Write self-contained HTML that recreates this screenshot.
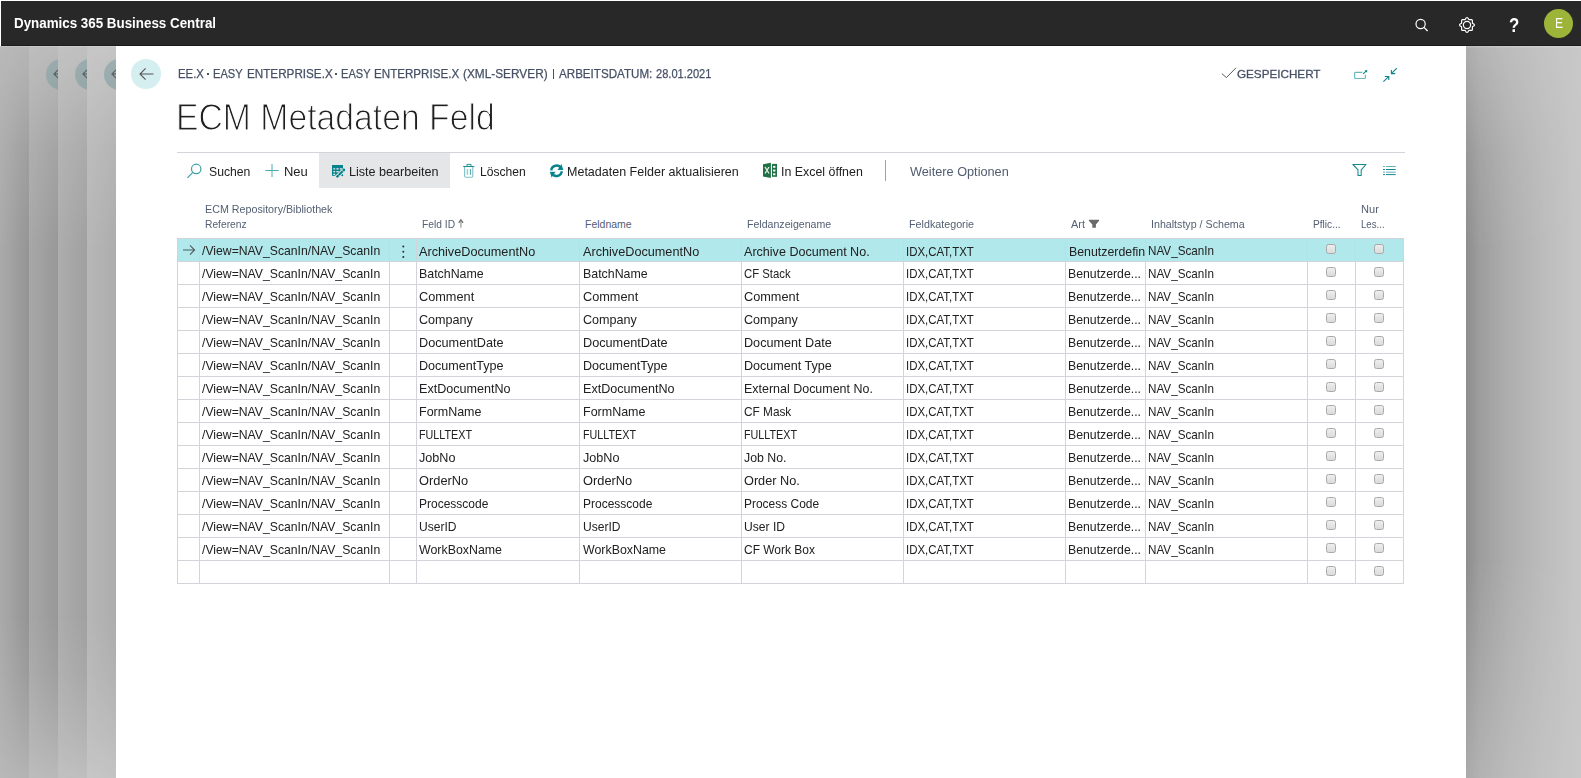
<!DOCTYPE html>
<html><head><meta charset="utf-8">
<style>
*{box-sizing:border-box;margin:0;padding:0}
html,body{width:1581px;height:778px;overflow:hidden;background:#fff}
body{font-family:"Liberation Sans",sans-serif;position:relative;color:#212121}
.abs{position:absolute}
.t{position:absolute;white-space:pre;transform-origin:0 50%;display:block}
.cb{width:10px;height:10px;border:1px solid #a9a9a9;border-radius:2.5px;background:linear-gradient(#eee,#dbdbdb)}
#topbar{left:1px;top:1px;width:1580px;height:45px;background:#282828;border-bottom:1px solid #1c1c1c}
</style></head><body>
<div id="topbar" class="abs"></div>
<div class="abs" style="left:0px;top:46px;width:29px;height:732px;background:#bcbcbc;"></div>
<div class="abs" style="left:29px;top:46px;width:29px;height:732px;background:#c2c2c2;"></div>
<div class="abs" style="left:58px;top:46px;width:29px;height:732px;background:#c6c6c6;"></div>
<div class="abs" style="left:87px;top:46px;width:29px;height:732px;background:#cacaca;"></div>
<div class="abs" style="left:29px;top:46px;width:29px;height:80px;overflow:hidden"><div class="abs" style="left:16.6px;top:12.5px;width:31px;height:31px;border-radius:50%;background:#a2b4b6"></div><svg class="abs" style="left:23.4px;top:20px" width="16" height="16" viewBox="0 0 16 16"><path d="M7.5 2.5 L2 8 L7.5 13.5 M2 8 H15" fill="none" stroke="#5f6363" stroke-width="1.2"/></svg></div>
<div class="abs" style="left:58px;top:46px;width:29px;height:80px;overflow:hidden"><div class="abs" style="left:16.6px;top:12.5px;width:31px;height:31px;border-radius:50%;background:#a2b4b6"></div><svg class="abs" style="left:23.4px;top:20px" width="16" height="16" viewBox="0 0 16 16"><path d="M7.5 2.5 L2 8 L7.5 13.5 M2 8 H15" fill="none" stroke="#5f6363" stroke-width="1.2"/></svg></div>
<div class="abs" style="left:87px;top:46px;width:29px;height:80px;overflow:hidden"><div class="abs" style="left:16.6px;top:12.5px;width:31px;height:31px;border-radius:50%;background:#a2b4b6"></div><svg class="abs" style="left:23.4px;top:20px" width="16" height="16" viewBox="0 0 16 16"><path d="M7.5 2.5 L2 8 L7.5 13.5 M2 8 H15" fill="none" stroke="#5f6363" stroke-width="1.2"/></svg></div>
<div class="abs" style="left:0px;top:46px;width:29px;height:732px;background:linear-gradient(to right,rgba(0,0,0,0.09),rgba(0,0,0,0.21));-webkit-mask-image:linear-gradient(to bottom,rgba(0,0,0,.16) 0,rgba(0,0,0,.30) 4%,rgba(0,0,0,.72) 14%,#000 28%,#000 78%,rgba(0,0,0,.82) 86%,rgba(0,0,0,.5) 94%,rgba(0,0,0,.2) 100%);mask-image:linear-gradient(to bottom,rgba(0,0,0,.16) 0,rgba(0,0,0,.30) 4%,rgba(0,0,0,.72) 14%,#000 28%,#000 78%,rgba(0,0,0,.82) 86%,rgba(0,0,0,.5) 94%,rgba(0,0,0,.2) 100%);"></div>
<div class="abs" style="left:29px;top:46px;width:29px;height:732px;background:linear-gradient(to right,rgba(0,0,0,0.134),rgba(0,0,0,0.216));-webkit-mask-image:linear-gradient(to bottom,rgba(0,0,0,.16) 0,rgba(0,0,0,.30) 4%,rgba(0,0,0,.72) 14%,#000 28%,#000 78%,rgba(0,0,0,.82) 86%,rgba(0,0,0,.5) 94%,rgba(0,0,0,.2) 100%);mask-image:linear-gradient(to bottom,rgba(0,0,0,.16) 0,rgba(0,0,0,.30) 4%,rgba(0,0,0,.72) 14%,#000 28%,#000 78%,rgba(0,0,0,.82) 86%,rgba(0,0,0,.5) 94%,rgba(0,0,0,.2) 100%);"></div>
<div class="abs" style="left:58px;top:46px;width:29px;height:732px;background:linear-gradient(to right,rgba(0,0,0,0.126),rgba(0,0,0,0.19));-webkit-mask-image:linear-gradient(to bottom,rgba(0,0,0,.16) 0,rgba(0,0,0,.30) 4%,rgba(0,0,0,.72) 14%,#000 28%,#000 78%,rgba(0,0,0,.82) 86%,rgba(0,0,0,.5) 94%,rgba(0,0,0,.2) 100%);mask-image:linear-gradient(to bottom,rgba(0,0,0,.16) 0,rgba(0,0,0,.30) 4%,rgba(0,0,0,.72) 14%,#000 28%,#000 78%,rgba(0,0,0,.82) 86%,rgba(0,0,0,.5) 94%,rgba(0,0,0,.2) 100%);"></div>
<div class="abs" style="left:87px;top:46px;width:29px;height:732px;background:linear-gradient(to right,rgba(0,0,0,0.09),rgba(0,0,0,0.144));-webkit-mask-image:linear-gradient(to bottom,rgba(0,0,0,.16) 0,rgba(0,0,0,.30) 4%,rgba(0,0,0,.72) 14%,#000 28%,#000 78%,rgba(0,0,0,.82) 86%,rgba(0,0,0,.5) 94%,rgba(0,0,0,.2) 100%);mask-image:linear-gradient(to bottom,rgba(0,0,0,.16) 0,rgba(0,0,0,.30) 4%,rgba(0,0,0,.72) 14%,#000 28%,#000 78%,rgba(0,0,0,.82) 86%,rgba(0,0,0,.5) 94%,rgba(0,0,0,.2) 100%);"></div>
<div class="abs" style="left:1466px;top:46px;width:115px;height:732px;background:#cacaca;"></div>
<div class="abs" style="left:1466px;top:46px;width:115px;height:732px;background:linear-gradient(to right,rgba(0,0,0,.30) 0,rgba(0,0,0,.22) 12%,rgba(0,0,0,.135) 38%,rgba(0,0,0,.065) 68%,rgba(0,0,0,.01) 100%);-webkit-mask-image:linear-gradient(to bottom,rgba(0,0,0,.48) 0,rgba(0,0,0,.6) 5%,rgba(0,0,0,.85) 15%,#000 28%,#000 70%,rgba(0,0,0,.79) 84%,rgba(0,0,0,.53) 100%);mask-image:linear-gradient(to bottom,rgba(0,0,0,.48) 0,rgba(0,0,0,.6) 5%,rgba(0,0,0,.85) 15%,#000 28%,#000 70%,rgba(0,0,0,.79) 84%,rgba(0,0,0,.53) 100%);"></div>
<div class="abs" style="left:0px;top:46px;width:116px;height:1px;background:rgba(255,255,255,.18);"></div>
<div class="abs" style="left:1466px;top:46px;width:115px;height:1px;background:rgba(255,255,255,.2);"></div>
<div class="abs" style="left:1466px;top:47px;width:115px;height:1px;background:rgba(255,255,255,.08);"></div>
<div class="abs" style="left:207.2px;top:73px;width:1.8px;height:1.8px;background:#465166"></div>
<div class="abs" style="left:335.20000000000005px;top:73px;width:1.8px;height:1.8px;background:#465166"></div>
<div class="abs" style="left:552.8px;top:68.8px;width:1.3px;height:10px;background:#465166;"></div>
<div class="abs" style="left:130.8px;top:58.8px;width:30.6px;height:30.2px;border-radius:50%;background:#d5eef0"></div>
<svg class="abs" style="left:138px;top:66px" width="17" height="16" viewBox="0 0 17 16"><path d="M7.6 2.4 L2 8 L7.6 13.6 M2 8 H15.4" fill="none" stroke="#555" stroke-width="1.1"/></svg>
<div class="abs" style="left:177px;top:152px;width:1228px;height:1px;background:#d3d4d9;"></div>
<div class="abs" style="left:319px;top:153px;width:131px;height:35px;background:#e5e6e8;"></div>
<div class="abs" style="left:885px;top:160px;width:1px;height:21px;background:#9aa2b0;"></div>
<div class="abs" style="left:178px;top:239px;width:1225px;height:22px;background:#b1e8eb;"></div>
<div class="abs" style="left:177px;top:238px;width:1227px;height:1px;background:#d3d4d9;"></div>
<div class="abs" style="left:177px;top:261px;width:1227px;height:1px;background:#d3d4d9;"></div>
<div class="abs" style="left:177px;top:284px;width:1227px;height:1px;background:#d3d4d9;"></div>
<div class="abs" style="left:177px;top:307px;width:1227px;height:1px;background:#d3d4d9;"></div>
<div class="abs" style="left:177px;top:330px;width:1227px;height:1px;background:#d3d4d9;"></div>
<div class="abs" style="left:177px;top:353px;width:1227px;height:1px;background:#d3d4d9;"></div>
<div class="abs" style="left:177px;top:376px;width:1227px;height:1px;background:#d3d4d9;"></div>
<div class="abs" style="left:177px;top:399px;width:1227px;height:1px;background:#d3d4d9;"></div>
<div class="abs" style="left:177px;top:422px;width:1227px;height:1px;background:#d3d4d9;"></div>
<div class="abs" style="left:177px;top:445px;width:1227px;height:1px;background:#d3d4d9;"></div>
<div class="abs" style="left:177px;top:468px;width:1227px;height:1px;background:#d3d4d9;"></div>
<div class="abs" style="left:177px;top:491px;width:1227px;height:1px;background:#d3d4d9;"></div>
<div class="abs" style="left:177px;top:514px;width:1227px;height:1px;background:#d3d4d9;"></div>
<div class="abs" style="left:177px;top:537px;width:1227px;height:1px;background:#d3d4d9;"></div>
<div class="abs" style="left:177px;top:560px;width:1227px;height:1px;background:#d3d4d9;"></div>
<div class="abs" style="left:177px;top:583px;width:1227px;height:1px;background:#d3d4d9;"></div>
<div class="abs" style="left:177px;top:238px;width:1px;height:346px;background:#d3d4d9;"></div>
<div class="abs" style="left:199px;top:238px;width:1px;height:346px;background:#d3d4d9;"></div>
<div class="abs" style="left:389px;top:238px;width:1px;height:346px;background:#d3d4d9;"></div>
<div class="abs" style="left:416px;top:238px;width:1px;height:346px;background:#d3d4d9;"></div>
<div class="abs" style="left:579px;top:238px;width:1px;height:346px;background:#d3d4d9;"></div>
<div class="abs" style="left:741px;top:238px;width:1px;height:346px;background:#d3d4d9;"></div>
<div class="abs" style="left:903px;top:238px;width:1px;height:346px;background:#d3d4d9;"></div>
<div class="abs" style="left:1065px;top:238px;width:1px;height:346px;background:#d3d4d9;"></div>
<div class="abs" style="left:1145px;top:238px;width:1px;height:346px;background:#d3d4d9;"></div>
<div class="abs" style="left:1307px;top:238px;width:1px;height:346px;background:#d3d4d9;"></div>
<div class="abs" style="left:1355px;top:238px;width:1px;height:346px;background:#d3d4d9;"></div>
<div class="abs" style="left:1403px;top:238px;width:1px;height:346px;background:#d3d4d9;"></div>
<div class="abs cb" style="left:1326px;top:244px"></div>
<div class="abs cb" style="left:1374px;top:244px"></div>
<div class="abs cb" style="left:1326px;top:267px"></div>
<div class="abs cb" style="left:1374px;top:267px"></div>
<div class="abs cb" style="left:1326px;top:290px"></div>
<div class="abs cb" style="left:1374px;top:290px"></div>
<div class="abs cb" style="left:1326px;top:313px"></div>
<div class="abs cb" style="left:1374px;top:313px"></div>
<div class="abs cb" style="left:1326px;top:336px"></div>
<div class="abs cb" style="left:1374px;top:336px"></div>
<div class="abs cb" style="left:1326px;top:359px"></div>
<div class="abs cb" style="left:1374px;top:359px"></div>
<div class="abs cb" style="left:1326px;top:382px"></div>
<div class="abs cb" style="left:1374px;top:382px"></div>
<div class="abs cb" style="left:1326px;top:405px"></div>
<div class="abs cb" style="left:1374px;top:405px"></div>
<div class="abs cb" style="left:1326px;top:428px"></div>
<div class="abs cb" style="left:1374px;top:428px"></div>
<div class="abs cb" style="left:1326px;top:451px"></div>
<div class="abs cb" style="left:1374px;top:451px"></div>
<div class="abs cb" style="left:1326px;top:474px"></div>
<div class="abs cb" style="left:1374px;top:474px"></div>
<div class="abs cb" style="left:1326px;top:497px"></div>
<div class="abs cb" style="left:1374px;top:497px"></div>
<div class="abs cb" style="left:1326px;top:520px"></div>
<div class="abs cb" style="left:1374px;top:520px"></div>
<div class="abs cb" style="left:1326px;top:543px"></div>
<div class="abs cb" style="left:1374px;top:543px"></div>
<div class="abs cb" style="left:1326px;top:566px"></div>
<div class="abs cb" style="left:1374px;top:566px"></div>
<svg class="abs" style="left:182px;top:244px" width="14" height="12" viewBox="0 0 14 12"><path d="M1 6 H12.4 M8 1.3 L12.6 6 L8 10.7" fill="none" stroke="#4f5e5f" stroke-width="1.1"/></svg>
<svg class="abs" style="left:398px;top:242px" width="12" height="20" viewBox="398 242 12 20"><circle cx="403.3" cy="246.4" r="1" fill="#2e2e2e"/><circle cx="403.3" cy="251.7" r="1" fill="#2e2e2e"/><circle cx="403.3" cy="257" r="1" fill="#2e2e2e"/></svg>
<svg class="abs" style="left:1410px;top:12px;" width="24" height="24" viewBox="1410 12 24 24"><circle cx="1420.6" cy="24" r="4.6" fill="none" stroke="#fff" stroke-width="1.2"/><path d="M1424 27.4 L1427.6 31" stroke="#fff" stroke-width="1.3" fill="none"/></svg>
<svg class="abs" style="left:1455px;top:13px;" width="24" height="24" viewBox="1455 13 24 24"><path d="M1465.2 19.6 Q1467 15.4 1468.8 19.6 H1471.4 Q1472.4 19.6 1472.4 20.6 V23.2 Q1476.6 25 1472.4 26.8 V29.4 Q1472.4 30.4 1471.4 30.4 H1468.8 Q1467 34.6 1465.2 30.4 H1462.6 Q1461.6 30.4 1461.6 29.4 V26.8 Q1457.4 25 1461.6 23.2 V20.6 Q1461.6 19.6 1462.6 19.6 Z" fill="none" stroke="#fff" stroke-width="1.2" stroke-linejoin="round"/><circle cx="1467" cy="25" r="3.6" fill="none" stroke="#fff" stroke-width="1.2"/></svg>
<div class="abs" style="left:1543.9px;top:8.9px;width:29.2px;height:29.2px;border-radius:50%;background:#9cb438"></div>
<svg class="abs" style="left:1218px;top:64px;" width="22" height="18" viewBox="1218 64 22 18"><path d="M1221.8 73.6 L1226.4 77.6 L1236 67.8" fill="none" stroke="#5a5a5a" stroke-width="1"/></svg>
<svg class="abs" style="left:1350px;top:66px;" width="22" height="18" viewBox="1350 66 22 18"><path d="M1362.4 72.3 H1355.6 Q1354.6 72.3 1354.6 73.3 V77.5 Q1354.6 78.5 1355.6 78.5 H1364.4 Q1365.4 78.5 1365.4 77.5 V74.8" fill="none" stroke="#6db6bb" stroke-width="1.2"/><path d="M1363.2 73.8 L1366.6 70.6" stroke="#0a858c" stroke-width="1.1" fill="none"/><path d="M1364.6 70.2 H1367.2 V72.8 Z" fill="#0a858c"/></svg>
<svg class="abs" style="left:1380px;top:64px;" width="20" height="22" viewBox="1380 64 20 22"><path d="M1396.8 68.2 L1391.6 73.4 M1391.4 70 V73.6 H1395.2 M1383.4 81.6 L1388.6 76.6 M1384.8 76.5 H1388.8 V80" fill="none" stroke="#0a858c" stroke-width="1.1"/></svg>
<svg class="abs" style="left:184px;top:160px;" width="22" height="22" viewBox="184 160 22 22"><circle cx="196.2" cy="168.9" r="4.7" fill="none" stroke="#3d9fa6" stroke-width="1.2"/><path d="M192.8 172.4 L187.4 177.8" stroke="#3d9fa6" stroke-width="1.2" fill="none"/></svg>
<svg class="abs" style="left:262px;top:160px;" width="20" height="20" viewBox="262 160 20 20"><path d="M265.4 170.5 H278.8 M272 163.9 V177" stroke="#4fabb1" stroke-width="1" fill="none"/></svg>
<svg class="abs" style="left:328px;top:161px;" width="20" height="20" viewBox="328 161 20 20"><rect x="332" y="165" width="11" height="10.8" fill="#07848b"/><g fill="#e5e6e8"><rect x="333.3" y="168.2" width="1.9" height="1.3"/><rect x="336.4" y="168.2" width="2.3" height="1.3"/><rect x="339.9" y="168.2" width="2" height="1.3"/><rect x="333.3" y="171" width="1.9" height="1.3"/><rect x="336.4" y="171" width="2.3" height="1.3"/><rect x="333.3" y="173.7" width="1.9" height="1.3"/></g><path d="M336.4 177.6 L344.2 169.8" stroke="#e5e6e8" stroke-width="4.2"/><path d="M336.6 177.2 L338.6 175.2" stroke="#07848b" stroke-width="2.2"/><path d="M338.8 175 L342.6 171.2" stroke="#07848b" stroke-width="2.2"/><circle cx="343.8" cy="170" r="1.4" fill="#07848b"/><circle cx="342.4" cy="175.4" r="0.8" fill="#07848b"/></svg>
<svg class="abs" style="left:460px;top:161px;" width="18" height="20" viewBox="460 161 18 20"><path d="M463.2 166.5 H474.3" stroke="#1f8d93" stroke-width="1.1"/><path d="M467 166.3 V164.4 H471 V166.3" fill="none" stroke="#2a949a" stroke-width="1"/><path d="M464.6 167 V176 Q464.6 177.2 465.8 177.2 H471.6 Q472.8 177.2 472.8 176 V167" fill="none" stroke="#7fc1c5" stroke-width="1.1"/><path d="M467.4 169 V174.8" stroke="#9dd0d3" stroke-width="1.6"/><path d="M470.4 169 V174.8" stroke="#4aa5ab" stroke-width="1"/></svg>
<svg class="abs" style="left:548px;top:161px;" width="18" height="20" viewBox="548 161 18 20"><path d="M551.30 170.67 A5.2 5.2 0 0 1 561.21 168.65" fill="none" stroke="#07848b" stroke-width="2.5"/><path d="M561.70 171.03 A5.2 5.2 0 0 1 551.79 173.05" fill="none" stroke="#07848b" stroke-width="2.5"/><path d="M561.4 164 L563.3 170 H557.6 Z" fill="#07848b"/><path d="M551.6 177.6 L549.9 171.7 H555.6 Z" fill="#07848b"/><path d="M549 170.85 H564" stroke="#fff" stroke-opacity=".75" stroke-width=".9"/></svg>
<svg class="abs" style="left:760px;top:160px;" width="20" height="20" viewBox="760 160 20 20"><path d="M763 164.3 L770.9 162.8 V177.9 L763 176.5 Z" fill="#207245"/><path d="M765 167 L769 173.5 M769 167 L765 173.5" stroke="#e8efe9" stroke-width="1.3"/><rect x="772" y="163.9" width="5" height="12.9" fill="#207245"/><g fill="#fff"><rect x="773.1" y="165.9" width="2.3" height="1.9"/><rect x="773.1" y="169.6" width="2.3" height="1.9"/><rect x="773.1" y="173.3" width="2.3" height="1.9"/></g></svg>
<svg class="abs" style="left:1348px;top:160px;" width="22" height="20" viewBox="1348 160 22 20"><path d="M1352.9 164.5 H1366 L1361.2 169.8 V175.5 H1358 V169.8 Z" fill="none" stroke="#1a8a90" stroke-width="1.1" stroke-linejoin="round"/></svg>
<svg class="abs" style="left:1380px;top:162px;" width="18" height="16" viewBox="1380 162 18 16"><path d="M1383 166.5 H1385 M1386 166.5 H1395.7" stroke="#63b1b6" stroke-width="1"/><path d="M1383 169.5 H1385 M1386 169.5 H1395.7" stroke="#138990" stroke-width="1"/><path d="M1383 172.2 H1385 M1386 172.2 H1395.7" stroke="#63b1b6" stroke-width="1"/><path d="M1383 174.6 H1385 M1386 174.6 H1395.7" stroke="#138990" stroke-width="1"/></svg>
<svg class="abs" style="left:455px;top:216px;" width="12" height="14" viewBox="455 216 12 14"><path d="M460.9 227.8 V221.2" stroke="#a6a6a6" stroke-width="1.4" fill="none"/><path d="M458.7 222.9 L460.9 219.9 L463.1 222.9" fill="none" stroke="#707070" stroke-width="1.3"/></svg>
<svg class="abs" style="left:1086px;top:216px;" width="16" height="14" viewBox="1086 216 16 14"><path d="M1088.9 219.8 H1099.1 V220.8 L1095.9 224.6 V227.7 H1092.3 V224.6 L1088.9 220.8 Z" fill="#6b6b6b"/></svg>
<!--ICONS-->
<span class="t" style="left:13.70px;top:14.15px;font-size:14px;line-height:18px;color:#fff;font-weight:bold;transform:scaleX(0.9546);">Dynamics 365 Business Central</span>
<span class="t" style="left:177.90px;top:66.14px;font-size:12px;line-height:16px;color:#465166;transform:scaleX(0.9474);-webkit-text-stroke:.25px #465166;">EE.X</span>
<span class="t" style="left:212.80px;top:66.14px;font-size:12px;line-height:16px;color:#465166;transform:scaleX(0.9252);-webkit-text-stroke:.25px #465166;">EASY</span>
<span class="t" style="left:246.50px;top:66.14px;font-size:12px;line-height:16px;color:#465166;transform:scaleX(0.9737);-webkit-text-stroke:.25px #465166;">ENTERPRISE.X</span>
<span class="t" style="left:340.70px;top:66.14px;font-size:12px;line-height:16px;color:#465166;transform:scaleX(0.9220);-webkit-text-stroke:.25px #465166;">EASY</span>
<span class="t" style="left:374.40px;top:66.14px;font-size:12px;line-height:16px;color:#465166;transform:scaleX(0.9681);-webkit-text-stroke:.25px #465166;">ENTERPRISE.X</span>
<span class="t" style="left:463.20px;top:66.14px;font-size:12px;line-height:16px;color:#465166;transform:scaleX(0.9863);-webkit-text-stroke:.25px #465166;">(XML-SERVER)</span>
<span class="t" style="left:558.80px;top:66.14px;font-size:12px;line-height:16px;color:#465166;transform:scaleX(0.9675);-webkit-text-stroke:.25px #465166;">ARBEITSDATUM:</span>
<span class="t" style="left:656.20px;top:66.14px;font-size:12px;line-height:16px;color:#465166;transform:scaleX(0.9227);-webkit-text-stroke:.25px #465166;">28.01.2021</span>
<span class="t" style="left:1236.90px;top:66.91px;font-size:11.8px;line-height:15px;color:#465166;transform:scaleX(0.9899);-webkit-text-stroke:.3px #465166;">GESPEICHERT</span>
<span class="t" style="left:175.80px;top:94.33px;font-size:36px;line-height:47px;color:#1f1f1f;transform:scaleX(0.9368);-webkit-text-stroke:1.1px #fff;">ECM Metadaten Feld</span>
<span class="t" style="left:208.60px;top:162.80px;font-size:13px;line-height:17px;color:#212121;transform:scaleX(0.9385);">Suchen</span>
<span class="t" style="left:283.60px;top:162.80px;font-size:13px;line-height:17px;color:#212121;transform:scaleX(0.9967);">Neu</span>
<span class="t" style="left:348.80px;top:162.80px;font-size:13px;line-height:17px;color:#212121;transform:scaleX(0.9683);">Liste bearbeiten</span>
<span class="t" style="left:480.20px;top:162.80px;font-size:13px;line-height:17px;color:#212121;transform:scaleX(0.9313);">Löschen</span>
<span class="t" style="left:567.40px;top:162.80px;font-size:13px;line-height:17px;color:#212121;transform:scaleX(0.9624);">Metadaten Felder aktualisieren</span>
<span class="t" style="left:781.00px;top:162.80px;font-size:13px;line-height:17px;color:#212121;transform:scaleX(0.9535);">In Excel öffnen</span>
<span class="t" style="left:909.50px;top:162.80px;font-size:13px;line-height:17px;color:#505c6d;transform:scaleX(0.9786);">Weitere Optionen</span>
<span class="t" style="left:205.20px;top:202.36px;font-size:10.5px;line-height:14px;color:#546073;transform:scaleX(1.0203);">ECM Repository/Bibliothek</span>
<span class="t" style="left:205.20px;top:217.36px;font-size:10.5px;line-height:14px;color:#546073;transform:scaleX(0.9770);">Referenz</span>
<span class="t" style="left:422.20px;top:217.36px;font-size:10.5px;line-height:14px;color:#546073;transform:scaleX(0.9760);">Feld ID</span>
<span class="t" style="left:585.00px;top:217.36px;font-size:10.5px;line-height:14px;color:#546073;">Feldname</span>
<span class="t" style="left:747.00px;top:217.36px;font-size:10.5px;line-height:14px;color:#546073;transform:scaleX(1.0077);">Feldanzeigename</span>
<span class="t" style="left:909.00px;top:217.36px;font-size:10.5px;line-height:14px;color:#546073;transform:scaleX(1.0221);">Feldkategorie</span>
<span class="t" style="left:1071.00px;top:217.36px;font-size:10.5px;line-height:14px;color:#546073;transform:scaleX(1.0379);">Art</span>
<span class="t" style="left:1151.30px;top:217.36px;font-size:10.5px;line-height:14px;color:#546073;transform:scaleX(1.0153);">Inhaltstyp / Schema</span>
<span class="t" style="left:1313.20px;top:217.36px;font-size:10.5px;line-height:14px;color:#546073;transform:scaleX(0.9663);">Pflic...</span>
<span class="t" style="left:1361.20px;top:202.36px;font-size:10.5px;line-height:14px;color:#546073;transform:scaleX(1.0537);">Nur</span>
<span class="t" style="left:1361.20px;top:217.36px;font-size:10.5px;line-height:14px;color:#546073;transform:scaleX(0.9199);">Les...</span>
<span class="t" style="left:202.20px;top:241.70px;font-size:13px;line-height:17px;color:#212121;transform:scaleX(0.9393);">/View=NAV_ScanIn/NAV_ScanIn</span>
<span class="t" style="left:419.30px;top:242.70px;font-size:13px;line-height:17px;color:#212121;transform:scaleX(0.9745);">ArchiveDocumentNo</span>
<span class="t" style="left:582.50px;top:242.70px;font-size:13px;line-height:17px;color:#212121;transform:scaleX(0.9745);">ArchiveDocumentNo</span>
<span class="t" style="left:744.40px;top:242.70px;font-size:13px;line-height:17px;color:#212121;transform:scaleX(0.9663);">Archive Document No.</span>
<span class="t" style="left:906.30px;top:242.70px;font-size:13px;line-height:17px;color:#212121;transform:scaleX(0.8797);">IDX,CAT,TXT</span>
<span class="t" style="left:1068.50px;top:242.70px;font-size:13px;line-height:17px;color:#212121;transform:scaleX(0.9500);width:79.5px;overflow:hidden;">Benutzerdefiniert</span>
<span class="t" style="left:1148.40px;top:241.70px;font-size:13px;line-height:17px;color:#212121;transform:scaleX(0.8981);">NAV_ScanIn</span>
<span class="t" style="left:202.20px;top:264.70px;font-size:13px;line-height:17px;color:#212121;transform:scaleX(0.9393);">/View=NAV_ScanIn/NAV_ScanIn</span>
<span class="t" style="left:419.30px;top:264.70px;font-size:13px;line-height:17px;color:#212121;transform:scaleX(0.9523);">BatchName</span>
<span class="t" style="left:582.50px;top:264.70px;font-size:13px;line-height:17px;color:#212121;transform:scaleX(0.9523);">BatchName</span>
<span class="t" style="left:744.40px;top:264.70px;font-size:13px;line-height:17px;color:#212121;transform:scaleX(0.8730);">CF Stack</span>
<span class="t" style="left:906.30px;top:264.70px;font-size:13px;line-height:17px;color:#212121;transform:scaleX(0.8797);">IDX,CAT,TXT</span>
<span class="t" style="left:1068.10px;top:264.70px;font-size:13px;line-height:17px;color:#212121;transform:scaleX(0.9438);">Benutzerde...</span>
<span class="t" style="left:1148.40px;top:264.70px;font-size:13px;line-height:17px;color:#212121;transform:scaleX(0.8981);">NAV_ScanIn</span>
<span class="t" style="left:202.20px;top:287.70px;font-size:13px;line-height:17px;color:#212121;transform:scaleX(0.9393);">/View=NAV_ScanIn/NAV_ScanIn</span>
<span class="t" style="left:419.30px;top:287.70px;font-size:13px;line-height:17px;color:#212121;transform:scaleX(0.9791);">Comment</span>
<span class="t" style="left:582.50px;top:287.70px;font-size:13px;line-height:17px;color:#212121;transform:scaleX(0.9791);">Comment</span>
<span class="t" style="left:744.40px;top:287.70px;font-size:13px;line-height:17px;color:#212121;transform:scaleX(0.9791);">Comment</span>
<span class="t" style="left:906.30px;top:287.70px;font-size:13px;line-height:17px;color:#212121;transform:scaleX(0.8797);">IDX,CAT,TXT</span>
<span class="t" style="left:1068.10px;top:287.70px;font-size:13px;line-height:17px;color:#212121;transform:scaleX(0.9438);">Benutzerde...</span>
<span class="t" style="left:1148.40px;top:287.70px;font-size:13px;line-height:17px;color:#212121;transform:scaleX(0.8981);">NAV_ScanIn</span>
<span class="t" style="left:202.20px;top:310.70px;font-size:13px;line-height:17px;color:#212121;transform:scaleX(0.9393);">/View=NAV_ScanIn/NAV_ScanIn</span>
<span class="t" style="left:419.30px;top:310.70px;font-size:13px;line-height:17px;color:#212121;transform:scaleX(0.9684);">Company</span>
<span class="t" style="left:582.50px;top:310.70px;font-size:13px;line-height:17px;color:#212121;transform:scaleX(0.9684);">Company</span>
<span class="t" style="left:744.40px;top:310.70px;font-size:13px;line-height:17px;color:#212121;transform:scaleX(0.9684);">Company</span>
<span class="t" style="left:906.30px;top:310.70px;font-size:13px;line-height:17px;color:#212121;transform:scaleX(0.8797);">IDX,CAT,TXT</span>
<span class="t" style="left:1068.10px;top:310.70px;font-size:13px;line-height:17px;color:#212121;transform:scaleX(0.9438);">Benutzerde...</span>
<span class="t" style="left:1148.40px;top:310.70px;font-size:13px;line-height:17px;color:#212121;transform:scaleX(0.8981);">NAV_ScanIn</span>
<span class="t" style="left:202.20px;top:333.70px;font-size:13px;line-height:17px;color:#212121;transform:scaleX(0.9393);">/View=NAV_ScanIn/NAV_ScanIn</span>
<span class="t" style="left:419.30px;top:333.70px;font-size:13px;line-height:17px;color:#212121;transform:scaleX(0.9753);">DocumentDate</span>
<span class="t" style="left:582.50px;top:333.70px;font-size:13px;line-height:17px;color:#212121;transform:scaleX(0.9753);">DocumentDate</span>
<span class="t" style="left:744.40px;top:333.70px;font-size:13px;line-height:17px;color:#212121;transform:scaleX(0.9718);">Document Date</span>
<span class="t" style="left:906.30px;top:333.70px;font-size:13px;line-height:17px;color:#212121;transform:scaleX(0.8797);">IDX,CAT,TXT</span>
<span class="t" style="left:1068.10px;top:333.70px;font-size:13px;line-height:17px;color:#212121;transform:scaleX(0.9438);">Benutzerde...</span>
<span class="t" style="left:1148.40px;top:333.70px;font-size:13px;line-height:17px;color:#212121;transform:scaleX(0.8981);">NAV_ScanIn</span>
<span class="t" style="left:202.20px;top:356.70px;font-size:13px;line-height:17px;color:#212121;transform:scaleX(0.9393);">/View=NAV_ScanIn/NAV_ScanIn</span>
<span class="t" style="left:419.30px;top:356.70px;font-size:13px;line-height:17px;color:#212121;transform:scaleX(0.9673);">DocumentType</span>
<span class="t" style="left:582.50px;top:356.70px;font-size:13px;line-height:17px;color:#212121;transform:scaleX(0.9673);">DocumentType</span>
<span class="t" style="left:744.40px;top:356.70px;font-size:13px;line-height:17px;color:#212121;transform:scaleX(0.9666);">Document Type</span>
<span class="t" style="left:906.30px;top:356.70px;font-size:13px;line-height:17px;color:#212121;transform:scaleX(0.8797);">IDX,CAT,TXT</span>
<span class="t" style="left:1068.10px;top:356.70px;font-size:13px;line-height:17px;color:#212121;transform:scaleX(0.9438);">Benutzerde...</span>
<span class="t" style="left:1148.40px;top:356.70px;font-size:13px;line-height:17px;color:#212121;transform:scaleX(0.8981);">NAV_ScanIn</span>
<span class="t" style="left:202.20px;top:379.70px;font-size:13px;line-height:17px;color:#212121;transform:scaleX(0.9393);">/View=NAV_ScanIn/NAV_ScanIn</span>
<span class="t" style="left:419.30px;top:379.70px;font-size:13px;line-height:17px;color:#212121;transform:scaleX(0.9675);">ExtDocumentNo</span>
<span class="t" style="left:582.50px;top:379.70px;font-size:13px;line-height:17px;color:#212121;transform:scaleX(0.9675);">ExtDocumentNo</span>
<span class="t" style="left:744.40px;top:379.70px;font-size:13px;line-height:17px;color:#212121;transform:scaleX(0.9589);">External Document No.</span>
<span class="t" style="left:906.30px;top:379.70px;font-size:13px;line-height:17px;color:#212121;transform:scaleX(0.8797);">IDX,CAT,TXT</span>
<span class="t" style="left:1068.10px;top:379.70px;font-size:13px;line-height:17px;color:#212121;transform:scaleX(0.9438);">Benutzerde...</span>
<span class="t" style="left:1148.40px;top:379.70px;font-size:13px;line-height:17px;color:#212121;transform:scaleX(0.8981);">NAV_ScanIn</span>
<span class="t" style="left:202.20px;top:402.70px;font-size:13px;line-height:17px;color:#212121;transform:scaleX(0.9393);">/View=NAV_ScanIn/NAV_ScanIn</span>
<span class="t" style="left:419.30px;top:402.70px;font-size:13px;line-height:17px;color:#212121;transform:scaleX(0.9610);">FormName</span>
<span class="t" style="left:582.50px;top:402.70px;font-size:13px;line-height:17px;color:#212121;transform:scaleX(0.9610);">FormName</span>
<span class="t" style="left:744.40px;top:402.70px;font-size:13px;line-height:17px;color:#212121;transform:scaleX(0.9092);">CF Mask</span>
<span class="t" style="left:906.30px;top:402.70px;font-size:13px;line-height:17px;color:#212121;transform:scaleX(0.8797);">IDX,CAT,TXT</span>
<span class="t" style="left:1068.10px;top:402.70px;font-size:13px;line-height:17px;color:#212121;transform:scaleX(0.9438);">Benutzerde...</span>
<span class="t" style="left:1148.40px;top:402.70px;font-size:13px;line-height:17px;color:#212121;transform:scaleX(0.8981);">NAV_ScanIn</span>
<span class="t" style="left:202.20px;top:425.70px;font-size:13px;line-height:17px;color:#212121;transform:scaleX(0.9393);">/View=NAV_ScanIn/NAV_ScanIn</span>
<span class="t" style="left:419.30px;top:425.70px;font-size:13px;line-height:17px;color:#212121;transform:scaleX(0.8270);">FULLTEXT</span>
<span class="t" style="left:582.50px;top:425.70px;font-size:13px;line-height:17px;color:#212121;transform:scaleX(0.8270);">FULLTEXT</span>
<span class="t" style="left:744.40px;top:425.70px;font-size:13px;line-height:17px;color:#212121;transform:scaleX(0.8270);">FULLTEXT</span>
<span class="t" style="left:906.30px;top:425.70px;font-size:13px;line-height:17px;color:#212121;transform:scaleX(0.8797);">IDX,CAT,TXT</span>
<span class="t" style="left:1068.10px;top:425.70px;font-size:13px;line-height:17px;color:#212121;transform:scaleX(0.9438);">Benutzerde...</span>
<span class="t" style="left:1148.40px;top:425.70px;font-size:13px;line-height:17px;color:#212121;transform:scaleX(0.8981);">NAV_ScanIn</span>
<span class="t" style="left:202.20px;top:448.70px;font-size:13px;line-height:17px;color:#212121;transform:scaleX(0.9393);">/View=NAV_ScanIn/NAV_ScanIn</span>
<span class="t" style="left:419.30px;top:448.70px;font-size:13px;line-height:17px;color:#212121;transform:scaleX(0.9708);">JobNo</span>
<span class="t" style="left:582.50px;top:448.70px;font-size:13px;line-height:17px;color:#212121;transform:scaleX(0.9708);">JobNo</span>
<span class="t" style="left:744.40px;top:448.70px;font-size:13px;line-height:17px;color:#212121;transform:scaleX(0.9479);">Job No.</span>
<span class="t" style="left:906.30px;top:448.70px;font-size:13px;line-height:17px;color:#212121;transform:scaleX(0.8797);">IDX,CAT,TXT</span>
<span class="t" style="left:1068.10px;top:448.70px;font-size:13px;line-height:17px;color:#212121;transform:scaleX(0.9438);">Benutzerde...</span>
<span class="t" style="left:1148.40px;top:448.70px;font-size:13px;line-height:17px;color:#212121;transform:scaleX(0.8981);">NAV_ScanIn</span>
<span class="t" style="left:202.20px;top:471.70px;font-size:13px;line-height:17px;color:#212121;transform:scaleX(0.9393);">/View=NAV_ScanIn/NAV_ScanIn</span>
<span class="t" style="left:419.30px;top:471.70px;font-size:13px;line-height:17px;color:#212121;transform:scaleX(0.9864);">OrderNo</span>
<span class="t" style="left:582.50px;top:471.70px;font-size:13px;line-height:17px;color:#212121;transform:scaleX(0.9864);">OrderNo</span>
<span class="t" style="left:744.40px;top:471.70px;font-size:13px;line-height:17px;color:#212121;transform:scaleX(0.9773);">Order No.</span>
<span class="t" style="left:906.30px;top:471.70px;font-size:13px;line-height:17px;color:#212121;transform:scaleX(0.8797);">IDX,CAT,TXT</span>
<span class="t" style="left:1068.10px;top:471.70px;font-size:13px;line-height:17px;color:#212121;transform:scaleX(0.9438);">Benutzerde...</span>
<span class="t" style="left:1148.40px;top:471.70px;font-size:13px;line-height:17px;color:#212121;transform:scaleX(0.8981);">NAV_ScanIn</span>
<span class="t" style="left:202.20px;top:494.70px;font-size:13px;line-height:17px;color:#212121;transform:scaleX(0.9393);">/View=NAV_ScanIn/NAV_ScanIn</span>
<span class="t" style="left:419.30px;top:494.70px;font-size:13px;line-height:17px;color:#212121;transform:scaleX(0.9231);">Processcode</span>
<span class="t" style="left:582.50px;top:494.70px;font-size:13px;line-height:17px;color:#212121;transform:scaleX(0.9231);">Processcode</span>
<span class="t" style="left:744.40px;top:494.70px;font-size:13px;line-height:17px;color:#212121;transform:scaleX(0.9195);">Process Code</span>
<span class="t" style="left:906.30px;top:494.70px;font-size:13px;line-height:17px;color:#212121;transform:scaleX(0.8797);">IDX,CAT,TXT</span>
<span class="t" style="left:1068.10px;top:494.70px;font-size:13px;line-height:17px;color:#212121;transform:scaleX(0.9438);">Benutzerde...</span>
<span class="t" style="left:1148.40px;top:494.70px;font-size:13px;line-height:17px;color:#212121;transform:scaleX(0.8981);">NAV_ScanIn</span>
<span class="t" style="left:202.20px;top:517.70px;font-size:13px;line-height:17px;color:#212121;transform:scaleX(0.9393);">/View=NAV_ScanIn/NAV_ScanIn</span>
<span class="t" style="left:419.30px;top:517.70px;font-size:13px;line-height:17px;color:#212121;transform:scaleX(0.9265);">UserID</span>
<span class="t" style="left:582.50px;top:517.70px;font-size:13px;line-height:17px;color:#212121;transform:scaleX(0.9265);">UserID</span>
<span class="t" style="left:744.40px;top:517.70px;font-size:13px;line-height:17px;color:#212121;transform:scaleX(0.9300);">User ID</span>
<span class="t" style="left:906.30px;top:517.70px;font-size:13px;line-height:17px;color:#212121;transform:scaleX(0.8797);">IDX,CAT,TXT</span>
<span class="t" style="left:1068.10px;top:517.70px;font-size:13px;line-height:17px;color:#212121;transform:scaleX(0.9438);">Benutzerde...</span>
<span class="t" style="left:1148.40px;top:517.70px;font-size:13px;line-height:17px;color:#212121;transform:scaleX(0.8981);">NAV_ScanIn</span>
<span class="t" style="left:202.20px;top:540.70px;font-size:13px;line-height:17px;color:#212121;transform:scaleX(0.9393);">/View=NAV_ScanIn/NAV_ScanIn</span>
<span class="t" style="left:419.30px;top:540.70px;font-size:13px;line-height:17px;color:#212121;transform:scaleX(0.9517);">WorkBoxName</span>
<span class="t" style="left:582.50px;top:540.70px;font-size:13px;line-height:17px;color:#212121;transform:scaleX(0.9517);">WorkBoxName</span>
<span class="t" style="left:744.40px;top:540.70px;font-size:13px;line-height:17px;color:#212121;transform:scaleX(0.9211);">CF Work Box</span>
<span class="t" style="left:906.30px;top:540.70px;font-size:13px;line-height:17px;color:#212121;transform:scaleX(0.8797);">IDX,CAT,TXT</span>
<span class="t" style="left:1068.10px;top:540.70px;font-size:13px;line-height:17px;color:#212121;transform:scaleX(0.9438);">Benutzerde...</span>
<span class="t" style="left:1148.40px;top:540.70px;font-size:13px;line-height:17px;color:#212121;transform:scaleX(0.8981);">NAV_ScanIn</span>
<span class="t" style="left:1508.70px;top:10.92px;font-size:21px;line-height:27px;color:#fff;font-weight:bold;transform:scaleX(0.7998);">?</span>
<span class="t" style="left:1554.80px;top:14.18px;font-size:14.5px;line-height:19px;color:#fff;transform:scaleX(0.8344);">E</span>
</body></html>
